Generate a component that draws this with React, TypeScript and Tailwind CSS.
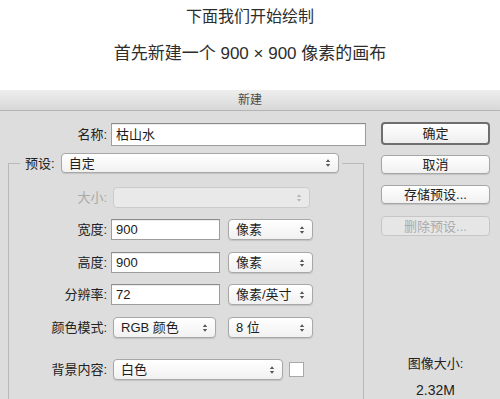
import React from 'react';

const Chevron: React.FC<{ dim?: boolean }> = ({ dim }) => (
  <svg width="6" height="10" viewBox="0 0 6 10" className="shrink-0">
    <path d="M0.8 4 L3 1.3 L5.2 4 Z" fill={dim ? '#b8b8b8' : '#555'} />
    <path d="M0.8 6 L3 8.7 L5.2 6 Z" fill={dim ? '#b8b8b8' : '#555'} />
  </svg>
);

const Popup: React.FC<{ w: string; value?: string; disabled?: boolean; h?: string }> = ({ w, value, disabled, h = 'h-[21px]' }) => (
  <div
    className={`${w} ${h} flex items-center justify-between pl-[7px] pr-[7px] rounded-[4px] border ${
      disabled
        ? 'border-[#cbcbcb] bg-[#e9e9e9]'
        : 'border-[#a8a8a8] bg-gradient-to-b from-white to-[#f1f1f1] shadow-[0_1px_1px_rgba(0,0,0,0.12)]'
    }`}
  >
    <span className="text-[13px] text-[#1e1e1e] leading-none">{value}</span>
    <Chevron dim={disabled} />
  </div>
);

const TextBox: React.FC<{ w: string; value: string; h?: string }> = ({ w, value, h = 'h-[21px]' }) => (
  <div className={`${w} ${h} flex items-center pl-[4px] bg-white border border-[#9d9d9d] border-t-[#8a8a8a] shadow-[inset_0_1px_1px_rgba(0,0,0,0.08)]`}>
    <span className="text-[13px] text-[#1a1a1a] leading-none">{value}</span>
  </div>
);

const Label: React.FC<{ text: string; w: string; dim?: boolean }> = ({ text, w, dim }) => (
  <span className={`${w} shrink-0 text-right text-[13px] leading-none ${dim ? 'text-[#a9a9a9]' : 'text-[#222]'}`}>{text}</span>
);

const Btn: React.FC<{ text: string; primary?: boolean; disabled?: boolean; h?: string; mt: string }> = ({ text, primary, disabled, h = 'h-[20px]', mt }) => (
  <div
    className={`${mt} ${h} w-[109px] flex items-center justify-center rounded-[4px] text-[13px] leading-none ${
      primary
        ? 'border-2 border-[#6f6f6f] bg-gradient-to-b from-white to-[#eeeeee] text-[#222]'
        : disabled
        ? 'border border-[#c6c6c6] bg-[#e6e6e6] text-[#ababab]'
        : 'border border-[#a6a6a6] bg-gradient-to-b from-white to-[#f0f0f0] shadow-[0_1px_1px_rgba(0,0,0,0.12)] text-[#222]'
    }`}
  >
    {text}
  </div>
);

export default function App() {
  return (
    <div className="w-[500px] h-[399px] overflow-hidden bg-white font-['Liberation_Sans','Noto_Sans_CJK_SC',sans-serif]">
      <div className="h-[90px] flex flex-col items-center text-[#2d2d2d]">
        <div className="mt-[7px] text-[16px] leading-[20px]">下面我们开始绘制</div>
        <div className="mt-[16px] text-[17px] leading-[22px]">首先新建一个 900 × 900 像素的画布</div>
      </div>

      <div className="h-[21px] flex items-center justify-center bg-gradient-to-b from-[#eeeeee] to-[#d8d8d8] border-b border-[#b4b4b4]">
        <span className="text-[12px] text-[#4a4a4a] leading-none">新建</span>
      </div>

      <div className="h-[288px] flex bg-[#dddddd]">
        <div className="w-[370px] shrink-0 pt-[12px]">
          <div className="h-[23px] flex items-center">
            <Label text="名称:" w="w-[107px]" />
            <div className="ml-[4px]">
              <TextBox w="w-[255px]" h="h-[23px]" value="枯山水" />
            </div>
          </div>

          <fieldset className="mt-[7px] ml-[8px] w-[356px] border border-b-0 border-[#b9b9b9] pb-[40px]">
            <legend className="ml-[11px] pl-[5px] pr-[3px]">
              <div className="flex items-center h-[20px]">
                <span className="text-[13px] leading-none text-[#222]">预设:</span>
                <div className="ml-[6px]">
                  <Popup w="w-[278px]" h="h-[20px]" value="自定" />
                </div>
              </div>
            </legend>

            <div className="mt-[14px] h-[21px] flex items-center">
              <Label text="大小:" w="w-[98px]" dim />
              <div className="ml-[6px]">
                <Popup w="w-[197px]" disabled />
              </div>
            </div>

            <div className="mt-[11px] h-[21px] flex items-center">
              <Label text="宽度:" w="w-[98px]" />
              <div className="ml-[4px]">
                <TextBox w="w-[109px]" value="900" />
              </div>
              <div className="ml-[8px]">
                <Popup w="w-[85px]" value="像素" />
              </div>
            </div>

            <div className="mt-[12px] h-[21px] flex items-center">
              <Label text="高度:" w="w-[98px]" />
              <div className="ml-[4px]">
                <TextBox w="w-[109px]" value="900" />
              </div>
              <div className="ml-[8px]">
                <Popup w="w-[85px]" value="像素" />
              </div>
            </div>

            <div className="mt-[11px] h-[21px] flex items-center">
              <Label text="分辨率:" w="w-[98px]" />
              <div className="ml-[4px]">
                <TextBox w="w-[109px]" value="72" />
              </div>
              <div className="ml-[8px]">
                <Popup w="w-[85px]" value="像素/英寸" />
              </div>
            </div>

            <div className="mt-[12px] h-[21px] flex items-center">
              <Label text="颜色模式:" w="w-[98px]" />
              <div className="ml-[6px]">
                <Popup w="w-[103px]" value="RGB 颜色" />
              </div>
              <div className="ml-[12px]">
                <Popup w="w-[85px]" value="8 位" />
              </div>
            </div>

            <div className="mt-[21px] h-[21px] flex items-center">
              <Label text="背景内容:" w="w-[98px]" />
              <div className="ml-[6px]">
                <Popup w="w-[170px]" value="白色" />
              </div>
              <div className="ml-[6px] w-[15px] h-[15px] bg-white border border-[#a9a9a9]" />
            </div>
          </fieldset>
        </div>

        <div className="ml-[11px] flex flex-col">
          <Btn mt="mt-[11px]" h="h-[24px]" text="确定" primary />
          <Btn mt="mt-[10px]" text="取消" />
          <Btn mt="mt-[11px]" text="存储预设..." />
          <Btn mt="mt-[12px]" h="h-[21px]" text="删除预设..." disabled />
          <div className="mt-[119px] flex flex-col items-center text-[#222]">
            <span className="text-[13px] leading-[18px]">图像大小:</span>
            <span className="mt-[8px] text-[14px] leading-[18px]">2.32M</span>
          </div>
        </div>
      </div>
    </div>
  );
}
